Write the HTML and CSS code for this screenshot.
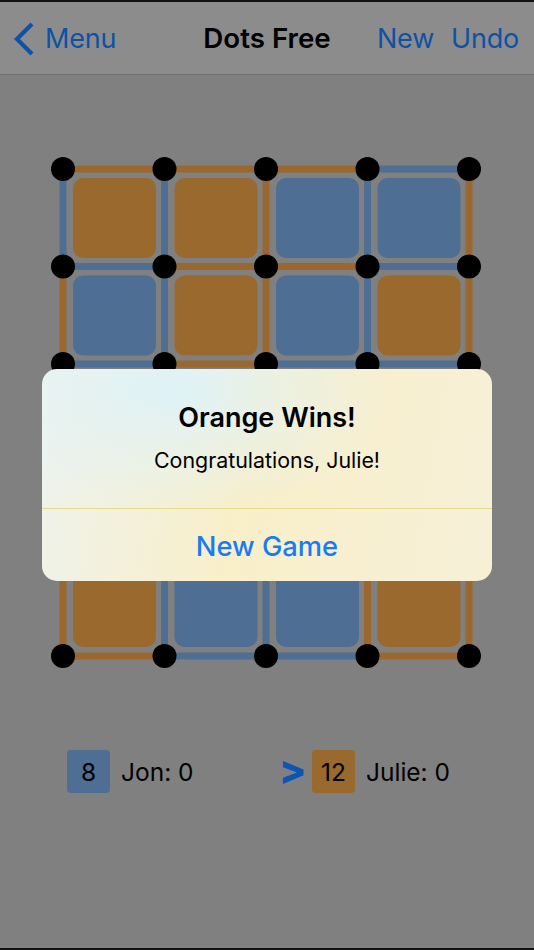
FILE: index.html
```html
<!DOCTYPE html>
<html>
<head>
<meta charset="utf-8">
<link rel="stylesheet" href="styles.css">
</head>
<body>
<div class="screen">
  <header class="nav">
    <div class="nav-left">
      <svg class="chev" width="22" height="34" viewBox="0 0 22 34"><path d="M19 2 L4 17 L19 32" fill="none" stroke="#0e52a6" stroke-width="4.2" stroke-linecap="butt" stroke-linejoin="miter"/></svg>
      <span class="nav-link">Menu</span>
    </div>
    <div class="nav-title">Dots Free</div>
    <div class="nav-right">
      <span class="nav-link">New</span>
      <span class="nav-link">Undo</span>
    </div>
  </header>

  <svg class="board" width="534" height="530" viewBox="0 150 534 530">
    <g stroke-width="7" stroke-linecap="butt">
      <line x1="63" y1="169" x2="164.5" y2="169" stroke="#9a682e"/>
      <line x1="164.5" y1="169" x2="266" y2="169" stroke="#9a682e"/>
      <line x1="266" y1="169" x2="367.5" y2="169" stroke="#9a682e"/>
      <line x1="367.5" y1="169" x2="469" y2="169" stroke="#4e6e93"/>
      <line x1="63" y1="169" x2="63" y2="266.5" stroke="#4e6e93"/>
      <line x1="164.5" y1="169" x2="164.5" y2="266.5" stroke="#4e6e93"/>
      <line x1="266" y1="169" x2="266" y2="266.5" stroke="#9a682e"/>
      <line x1="367.5" y1="169" x2="367.5" y2="266.5" stroke="#4e6e93"/>
      <line x1="469" y1="169" x2="469" y2="266.5" stroke="#9a682e"/>
      <line x1="63" y1="266.5" x2="164.5" y2="266.5" stroke="#4e6e93"/>
      <line x1="164.5" y1="266.5" x2="266" y2="266.5" stroke="#9a682e"/>
      <line x1="266" y1="266.5" x2="367.5" y2="266.5" stroke="#9a682e"/>
      <line x1="367.5" y1="266.5" x2="469" y2="266.5" stroke="#4e6e93"/>
      <line x1="63" y1="266.5" x2="63" y2="364" stroke="#9a682e"/>
      <line x1="164.5" y1="266.5" x2="164.5" y2="364" stroke="#4e6e93"/>
      <line x1="266" y1="266.5" x2="266" y2="364" stroke="#9a682e"/>
      <line x1="367.5" y1="266.5" x2="367.5" y2="364" stroke="#4e6e93"/>
      <line x1="469" y1="266.5" x2="469" y2="364" stroke="#9a682e"/>
      <line x1="63" y1="364" x2="164.5" y2="364" stroke="#4e6e93"/>
      <line x1="164.5" y1="364" x2="266" y2="364" stroke="#9a682e"/>
      <line x1="266" y1="364" x2="367.5" y2="364" stroke="#4e6e93"/>
      <line x1="367.5" y1="364" x2="469" y2="364" stroke="#4e6e93"/>
      <line x1="63" y1="364" x2="63" y2="559" stroke="#9a682e"/>
      <line x1="164.5" y1="364" x2="164.5" y2="559" stroke="#4e6e93"/>
      <line x1="266" y1="364" x2="266" y2="559" stroke="#4e6e93"/>
      <line x1="367.5" y1="364" x2="367.5" y2="559" stroke="#9a682e"/>
      <line x1="469" y1="364" x2="469" y2="559" stroke="#9a682e"/>
      <line x1="63" y1="559" x2="63" y2="656" stroke="#9a682e"/>
      <line x1="164.5" y1="559" x2="164.5" y2="656" stroke="#4e6e93"/>
      <line x1="266" y1="559" x2="266" y2="656" stroke="#4e6e93"/>
      <line x1="367.5" y1="559" x2="367.5" y2="656" stroke="#9a682e"/>
      <line x1="469" y1="559" x2="469" y2="656" stroke="#9a682e"/>
      <line x1="63" y1="656" x2="164.5" y2="656" stroke="#9a682e"/>
      <line x1="164.5" y1="656" x2="266" y2="656" stroke="#4e6e93"/>
      <line x1="266" y1="656" x2="367.5" y2="656" stroke="#4e6e93"/>
      <line x1="367.5" y1="656" x2="469" y2="656" stroke="#9a682e"/>
    </g>
    <g>
      <rect x="73" y="178" width="83" height="80" rx="10" fill="#99692e"/>
      <rect x="174.5" y="178" width="83" height="80" rx="10" fill="#99692e"/>
      <rect x="276" y="178" width="83" height="80" rx="10" fill="#4e6e94"/>
      <rect x="377.5" y="178" width="83" height="80" rx="10" fill="#4e6e94"/>

      <rect x="73" y="275.5" width="83" height="80" rx="10" fill="#4e6e94"/>
      <rect x="174.5" y="275.5" width="83" height="80" rx="10" fill="#99692e"/>
      <rect x="276" y="275.5" width="83" height="80" rx="10" fill="#4e6e94"/>
      <rect x="377.5" y="275.5" width="83" height="80" rx="10" fill="#99692e"/>

      <rect x="73" y="373" width="83" height="80" rx="10" fill="#99692e"/>
      <rect x="174.5" y="373" width="83" height="80" rx="10" fill="#4e6e94"/>
      <rect x="276" y="373" width="83" height="80" rx="10" fill="#99692e"/>
      <rect x="377.5" y="373" width="83" height="80" rx="10" fill="#99692e"/>

      <rect x="73" y="470.5" width="83" height="80" rx="10" fill="#99692e"/>
      <rect x="174.5" y="470.5" width="83" height="80" rx="10" fill="#4e6e94"/>
      <rect x="276" y="470.5" width="83" height="80" rx="10" fill="#99692e"/>
      <rect x="377.5" y="470.5" width="83" height="80" rx="10" fill="#99692e"/>

      <rect x="73" y="567" width="83" height="80" rx="10" fill="#99692e"/>
      <rect x="174.5" y="567" width="83" height="80" rx="10" fill="#4e6e94"/>
      <rect x="276" y="567" width="83" height="80" rx="10" fill="#4e6e94"/>
      <rect x="377.5" y="567" width="83" height="80" rx="10" fill="#99692e"/>
    </g>
    <g fill="#000">
      <circle cx="63" cy="169" r="12"/><circle cx="164.5" cy="169" r="12"/><circle cx="266" cy="169" r="12"/><circle cx="367.5" cy="169" r="12"/><circle cx="469" cy="169" r="12"/>
      <circle cx="63" cy="266.5" r="12"/><circle cx="164.5" cy="266.5" r="12"/><circle cx="266" cy="266.5" r="12"/><circle cx="367.5" cy="266.5" r="12"/><circle cx="469" cy="266.5" r="12"/>
      <circle cx="63" cy="364" r="12"/><circle cx="164.5" cy="364" r="12"/><circle cx="266" cy="364" r="12"/><circle cx="367.5" cy="364" r="12"/><circle cx="469" cy="364" r="12"/>
      <circle cx="63" cy="461.5" r="12"/><circle cx="164.5" cy="461.5" r="12"/><circle cx="266" cy="461.5" r="12"/><circle cx="367.5" cy="461.5" r="12"/><circle cx="469" cy="461.5" r="12"/>
      <circle cx="63" cy="559" r="12"/><circle cx="164.5" cy="559" r="12"/><circle cx="266" cy="559" r="12"/><circle cx="367.5" cy="559" r="12"/><circle cx="469" cy="559" r="12"/>
      <circle cx="63" cy="656" r="12"/><circle cx="164.5" cy="656" r="12"/><circle cx="266" cy="656" r="12"/><circle cx="367.5" cy="656" r="12"/><circle cx="469" cy="656" r="12"/>
    </g>
  </svg>

  <div class="scores">
    <div class="player">
      <span class="badge badge-blue">8</span>
      <span class="pname">Jon: 0</span>
    </div>
    <div class="player">
      <span class="turn">&gt;</span>
      <span class="badge badge-orange">12</span>
      <span class="pname">Julie: 0</span>
    </div>
  </div>

  <div class="alert">
    <div class="alert-body">
      <div class="alert-title">Orange Wins!</div>
      <div class="alert-msg">Congratulations, Julie!</div>
    </div>
    <div class="alert-btn">New Game</div>
  </div>
</div>
</body>
</html>
```

FILE: styles.css
```css
html, body {
  margin: 0;
  padding: 0;
  background: #000;
}
.screen {
  position: relative;
  width: 534px;
  height: 950px;
  box-sizing: border-box;
  border-top: 2px solid #111;
  border-bottom: 2px solid #111;
  background: #808080;
  overflow: hidden;
  font-family: Inter, "Liberation Sans", sans-serif;
}
.nav {
  height: 72px;
  background: #8c8c8c;
  border-bottom: 1px solid #707070;
  display: flex;
  align-items: center;
  justify-content: space-between;
  padding: 0 15px 0 13px;
  position: relative;
}
.nav-left {
  display: flex;
  align-items: center;
  gap: 10px;
}
.chev {
  display: block;
  margin-top: 1px;
}
.nav-link {
  color: #0e52a6;
  font-size: 27px;
  letter-spacing: -0.2px;
}
.nav-right {
  display: flex;
  gap: 17px;
  margin-right: 0px;
}
.nav-title {
  position: absolute;
  left: 0;
  right: 0;
  text-align: center;
  font-size: 27.7px;
  font-weight: 600;
  color: #000;
  pointer-events: none;
}
.board {
  display: block;
  margin-top: 75px;
}
.scores {
  display: grid;
  grid-template-columns: 215px auto;
  padding-left: 67px;
  margin-top: 70px;
  align-items: center;
}
.player {
  display: flex;
  align-items: center;
}
.badge {
  width: 43px;
  height: 43px;
  border-radius: 4px;
  display: flex;
  align-items: center;
  justify-content: center;
  font-size: 24.5px;
  color: #000;
}
.badge-blue { background: #4e6e94; }
.badge-orange { background: #99692e; }
.pname {
  margin-left: 11px;
  font-size: 24.5px;
  color: #000;
}
.turn {
  color: #0b56b5;
  font-size: 40px;
  font-weight: 800;
  width: 30px;
  margin-left: -3px;
  margin-right: 3px;
  line-height: 43px;
  margin-top: -4px;
}
.alert {
  position: absolute;
  left: 42px;
  top: 367px;
  width: 450px;
  height: 212px;
  border-radius: 15px;
  overflow: hidden;
  background:
    radial-gradient(ellipse 220px 130px at 130px 20px, rgba(222,243,250,0.95), rgba(222,243,250,0) 100%),
    linear-gradient(100deg, #eef3ee 0%, #f9efc9 45%, #f6f0d8 100%);
  display: flex;
  flex-direction: column;
}
.alert-body {
  height: 140px;
  box-sizing: border-box;
  border-bottom: 1px solid #e7d98e;
  text-align: center;
  padding-top: 32px;
}
.alert-title {
  font-size: 27px;
  font-weight: 600;
  color: #000;
}
.alert-msg {
  margin-top: 13px;
  font-size: 21.4px;
  color: #000;
}
.alert-btn {
  flex: 1;
  display: flex;
  align-items: center;
  justify-content: center;
  font-size: 27.3px;
  font-weight: 500;
  color: #1a7cf4;
  padding-top: 2px;
}
```
